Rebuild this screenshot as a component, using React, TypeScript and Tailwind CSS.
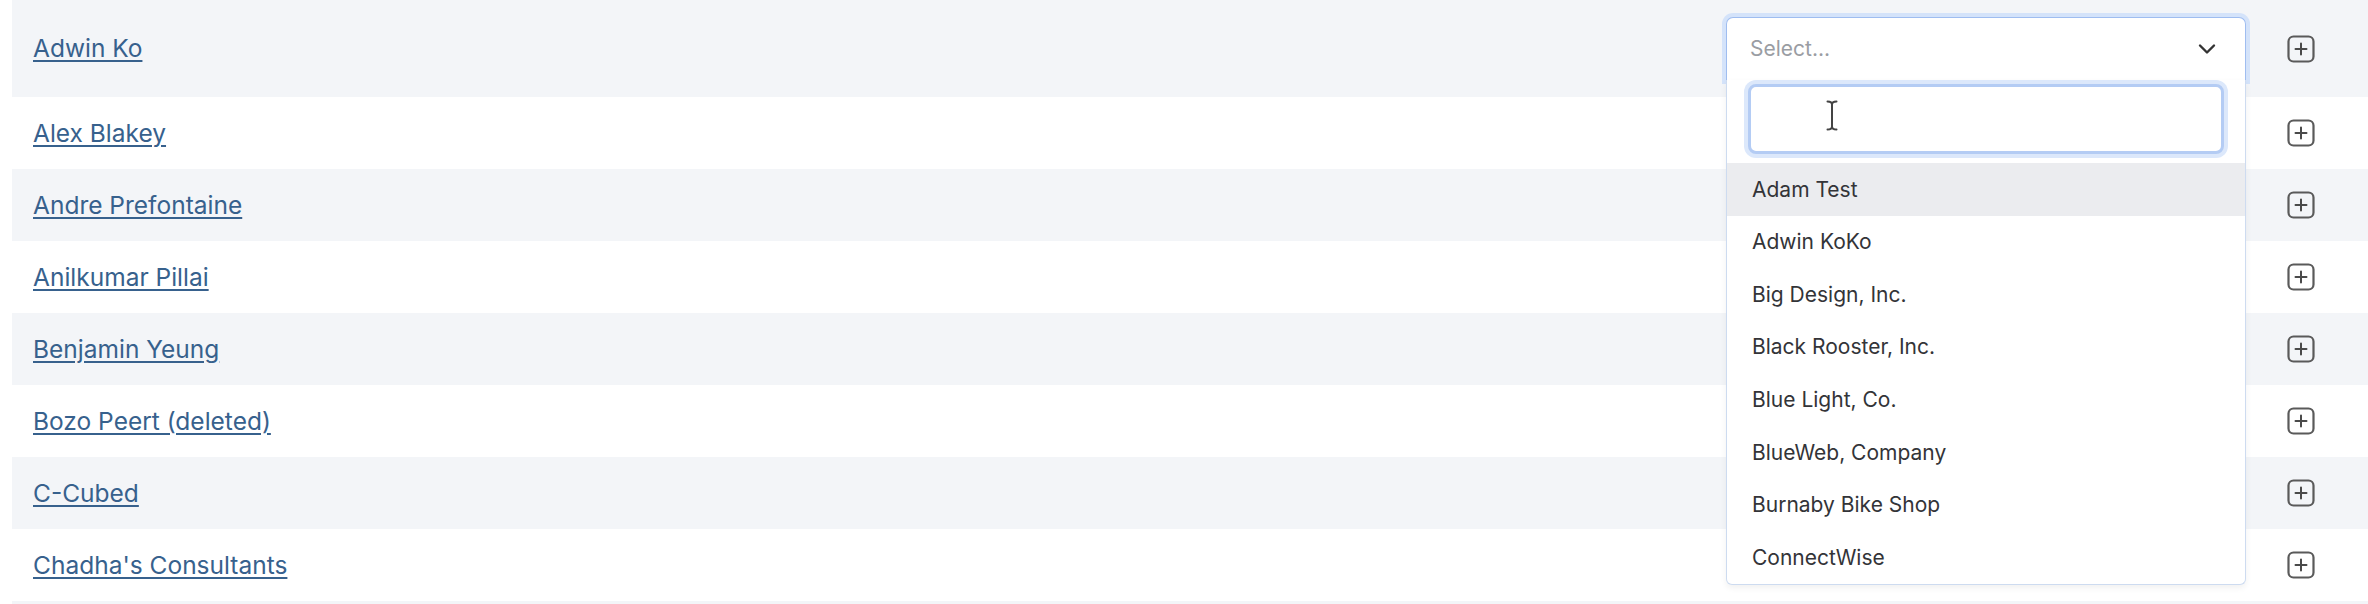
import React from "react";

const names = [
  "Adwin Ko",
  "Alex Blakey",
  "Andre Prefontaine",
  "Anilkumar Pillai",
  "Benjamin Yeung",
  "Bozo Peert (deleted)",
  "C-Cubed",
  "Chadha's Consultants",
  "",
];

const options = [
  "Adam Test",
  "Adwin KoKo",
  "Big Design, Inc.",
  "Black Rooster, Inc.",
  "Blue Light, Co.",
  "BlueWeb, Company",
  "Burnaby Bike Shop",
  "ConnectWise",
];

function PlusBox() {
  return (
    <svg width="28" height="28" viewBox="0 0 28 28" fill="none">
      <rect x="1.5" y="1.5" width="25" height="25" rx="5" stroke="#5a5a5a" strokeWidth="2.2" />
      <path d="M14 8.5v11M8.5 14h11" stroke="#4a4a4a" strokeWidth="2" strokeLinecap="round" />
    </svg>
  );
}

function Chevron() {
  return (
    <svg width="20" height="12" viewBox="0 0 20 12" fill="none">
      <path d="M3 2.5l7 7 7-7" stroke="#333333" strokeWidth="2.4" strokeLinecap="round" strokeLinejoin="round" />
    </svg>
  );
}

function IBeam() {
  return (
    <svg width="12" height="32" viewBox="0 0 12 32" fill="none">
      <path
        d="M1.5 1.5c2.5 0 4.5 0.8 4.5 3v22c0 2.2-2 3-4.5 3M10.5 1.5c-2.5 0-4.5 0.8-4.5 3v22c0 2.2 2 3 4.5 3"
        stroke="#444"
        strokeWidth="2"
        strokeLinecap="round"
      />
    </svg>
  );
}

function SelectBox() {
  return (
    <div className="relative mx-1 h-[63px] rounded-t-[7px] border border-b-0 border-[#9fbdf0] bg-white ring-4 ring-[#d4e3fa] flex items-center pl-[23px] pr-[28px]">
      <span className="flex-1 text-[21px] text-[#9a9da3]">Select...</span>
      <Chevron />
      <div className="absolute left-[-1px] right-[-1px] top-full z-10 rounded-b-[6px] border border-t-0 border-[#cddbf0] bg-white shadow-[0_3px_6px_rgba(0,0,0,0.06)]">
        <div className="px-[21px] pt-[4px] pb-[9px]">
          <div className="relative h-[70px] rounded-[8px] border-[3px] border-[#b4ccf4] ring-4 ring-[#dce8fb] bg-white">
            <div className="absolute left-[75px] top-[13px]">
              <IBeam />
            </div>
          </div>
        </div>
        <div>
          {options.map((o, i) => (
            <div
              key={o}
              className={`h-[52.6px] flex items-center px-[25px] text-[21px] text-[#333438] ${i === 0 ? "bg-[#ebecef]" : ""}`}
            >
              {o}
            </div>
          ))}
        </div>
      </div>
    </div>
  );
}

export default function App() {
  return (
    <div
      className="w-[2368px] h-[604px] overflow-hidden bg-white pl-3"
      style={{ fontFamily: "Inter, 'Noto Sans', sans-serif" }}
    >
      {names.map((name, i) => (
        <div
          key={i}
          className={`flex items-center pl-[21px] pr-[53px] ${i % 2 === 0 ? "bg-[#f3f5f8]" : "bg-white"} ${i === 0 ? "h-[97px]" : "h-[72px]"}`}
        >
          <div className="flex-1">
            {name && (
              <a className="text-[24.5px] text-[#37618d] underline underline-offset-[3px] decoration-[1.5px]" href="#">
                {name}
              </a>
            )}
          </div>
          <div className={`w-[528px] self-stretch ${i === 0 ? "pt-[17px]" : ""}`}>
            {i === 0 && <SelectBox />}
          </div>
          <div className="ml-[37px] flex items-center">{name && <PlusBox />}</div>
        </div>
      ))}
    </div>
  );
}
